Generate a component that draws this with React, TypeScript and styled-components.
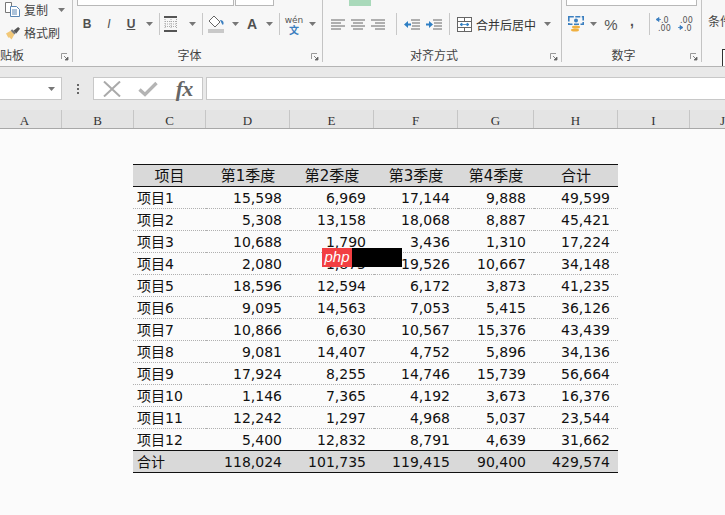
import React from "react";
import styled, { createGlobalStyle } from "styled-components";

const Global = createGlobalStyle`
  html, body { margin: 0; padding: 0; background: #fbfbfb; }
  body { width: 725px; height: 515px; overflow: hidden; font-family: "DejaVu Sans", "Noto Sans CJK SC", sans-serif; }
`;

const Page = styled.div`
  width: 725px; height: 515px; overflow: hidden; position: relative;
  display: flex; flex-direction: column;
`;

/* ---------- ribbon ---------- */
const Ribbon = styled.div`
  height: 66px; flex: none; display: flex; background: #f7f7f7;
  border-bottom: 1px solid #b4b4b4; overflow: hidden;
`;
const Group = styled.div<{ $w: number; $last?: boolean }>`
  width: ${p => p.$w}px; flex: none; height: 62px; position: relative;
  display: flex; flex-direction: column; box-sizing: border-box;
  border-right: ${p => (p.$last ? "none" : "1px solid #c4c4c4")};
`;
const Tools = styled.div`
  height: 48px; flex: none; display: flex; flex-direction: column;
`;
const TopClip = styled.div`
  height: 6px; flex: none; display: flex; box-sizing: border-box;
`;
const SelectStub = styled.div<{ $w: number; $ml?: number }>`
  width: ${p => p.$w}px; margin-left: ${p => p.$ml ?? 0}px; height: 6px; box-sizing: border-box;
  background: #fff; border: 1px solid #b8b8b8; border-top: none;
`;
const GreenStub = styled.div`
  width: 22px; height: 6px; margin-left: 26px; background: #a9d9ba;
`;
const ToolRow = styled.div<{ $pl: number }>`
  height: 36px; display: flex; align-items: center; padding-left: ${p => p.$pl}px;
`;
const Slot = styled.div<{ $w: number }>`
  width: ${p => p.$w}px; flex: none; display: flex; align-items: center; justify-content: center;
  color: #555; font-family: "Liberation Sans", sans-serif;
`;
const Percent = styled(Slot)`
  font-size: 15px;
`;
const Divider = styled.div`
  width: 1px; height: 22px; flex: none; background: #c8c8c8;
`;
const Letter = styled.span<{ $italic?: boolean; $underline?: boolean }>`
  font: ${p => (p.$italic ? "italic 400" : "700")} 12px "Liberation Sans", sans-serif;
  color: #505050; text-decoration: ${p => (p.$underline ? "underline" : "none")};
`;
const ColorLetter = styled(Letter)`
  font-size: 14px;
`;
const CommaMark = styled(Letter)`
  font-size: 14px; margin-top: -7px;
`;
const Wen = styled.div`
  display: flex; flex-direction: column; align-items: center;
  font: 9px/10px "DejaVu Sans", sans-serif; color: #555;
`;
const WenZi = styled.span`
  font: 700 10px/9px "Noto Sans CJK SC", sans-serif; color: #3b7fc0;
`;
const GroupLabel = styled.div`
  height: 14px; flex: none; display: flex; align-items: center; justify-content: center; padding-right: 16px;
  font: 12px/14px "Noto Sans CJK SC", sans-serif; color: #444;
`;
const ClippedLabel = styled(GroupLabel)`
  justify-content: flex-start; width: 24px; padding-right: 0;
`;
const Launcher = styled.svg`
  position: absolute; right: 3px; bottom: 1px; width: 8px; height: 8px;
`;
const ClipRows = styled.div`
  height: 48px; flex: none; display: flex; flex-direction: column; padding-left: 5px; box-sizing: border-box; margin-top: -2px;
  margin-bottom: 2px;
`;
const ClipRow = styled.div`
  height: 23px; display: flex; align-items: center; gap: 3px;
  font: 12px/16px "Noto Sans CJK SC", sans-serif; color: #444;
`;
const MergeText = styled.span`
  font: 12px "Noto Sans CJK SC", sans-serif; color: #333; width: 62px; margin-left: 4px; flex: none;
`;
const MoreCol = styled.div`
  flex: 1; padding: 13px 0 0 6px; font: 12px/16px "Noto Sans CJK SC", sans-serif; color: #444; position: relative; white-space: nowrap;
`;
const MoreBox = styled.div`
  position: absolute; left: 20px; top: 49px; width: 4px; height: 17px; border: 1px solid #333; background: #fff;
`;

/* ---------- formula bar ---------- */
const FormulaBar = styled.div`
  height: 43px; flex: none; display: flex; align-items: flex-start; padding-top: 10px;
  box-sizing: border-box; background: #e9e9e9;
`;
const NameBox = styled.div`
  width: 62px; height: 23px; flex: none; box-sizing: border-box; background: #fff;
  border: 1px solid #c8c8c8; border-left: none; display: flex; align-items: center; justify-content: flex-end; padding-right: 6px;
`;
const Dots = styled.div`
  width: 31px; height: 23px; flex: none; display: flex; flex-direction: column; align-items: center; justify-content: center; gap: 2px;
`;
const Dot = styled.i`
  width: 2px; height: 2px; background: #666; display: block;
`;
const FxBox = styled.div`
  width: 110px; height: 23px; flex: none; box-sizing: border-box; background: #fff; border: 1px solid #c8c8c8;
  display: flex; align-items: center;
`;
const FxSlot = styled.div`
  width: 36px; flex: none; display: flex; align-items: center; justify-content: center;
`;
const Fx = styled.span`
  font: italic 700 22px/22px "Liberation Serif", serif; color: #666; letter-spacing: -1px;
`;
const FormulaInput = styled.div`
  flex: 1; height: 23px; margin-left: 3px; box-sizing: border-box; background: #fff;
  border: 1px solid #c8c8c8; border-right: none;
`;

/* ---------- column headers ---------- */
const ColHeader = styled.div`
  height: 19px; flex: none; display: flex; background: #e4e4e4; border-bottom: 1px solid #a8a8a8; box-sizing: border-box; overflow: hidden;
`;
const ColCell = styled.div<{ $w: number; $pr?: number }>`
  width: ${p => p.$w}px; flex: none; box-sizing: border-box; border-right: 1px solid #c6c6c6;
  padding-right: ${p => p.$pr ?? 0}px;
  text-align: center; font: 13px/22px "Liberation Serif", serif; color: #333;
`;

/* ---------- sheet ---------- */
const Sheet = styled.div`
  flex: 1; padding: 35px 0 0 133px; background: #fbfbfb;
`;
const Table = styled.table`
  width: 485px; border-collapse: separate; border-spacing: 0; table-layout: fixed;
  font: 14px "DejaVu Sans", "Noto Sans CJK SC", sans-serif; color: #111;
`;
const Th = styled.th<{ $w: number }>`
  width: ${p => p.$w}px; height: 20px; padding: 1px 0 0; background: #d9d9d9; font-weight: 400; font-size: 15px; text-align: center;
  border-top: 1px solid #111; border-bottom: 1px solid #111; line-height: 20px;
`;
const Td = styled.td<{ $first?: boolean }>`
  height: 20px; padding: ${p => (p.$first ? "1px 0 0 4px" : "1px 8px 0 0")}; text-align: ${p => (p.$first ? "left" : "right")};
  border-bottom: 1px dotted #b0b0b0; line-height: 20px; white-space: nowrap;
`;
const TotalTd = styled(Td)`
  background: #d9d9d9; border-bottom: 1px solid #111;
`;
const LastTd = styled(Td)`
  border-bottom: 1px solid #111;
`;

/* ---------- watermark ---------- */
const Mark = styled.div`
  position: absolute; left: 322px; top: 248px; display: flex; height: 19px;
`;
const MarkRed = styled.div`
  width: 30px; background: #f23f42; color: #fff; text-align: center;
  font: italic 400 15px/17px "Liberation Sans", sans-serif;
`;
const MarkBlack = styled.div`
  width: 50px; background: #000;
`;

/* ---------- icons ---------- */
const Caret = () => (
  <svg width="7" height="4" viewBox="0 0 7 4"><path d="M0 0h7L3.5 4z" fill="#777" /></svg>
);
const LauncherIcon = () => (
  <Launcher viewBox="0 0 8 8">
    <path d="M.5 6V.5H6" fill="none" stroke="#999" />
    <path d="M3 3l3 3M7 4v3H4z" fill="#666" stroke="#666" strokeWidth=".8" />
  </Launcher>
);
const CopyIcon = () => (
  <svg width="16" height="15" viewBox="0 0 16 15" fill="none">
    <path d="M.5.5h6v10h-6z" stroke="#777" fill="#fff" />
    <path d="M5.5 4.5h6l3 3v7h-9z" stroke="#5a86b5" fill="#fff" />
    <path d="M7 8h5M7 10h5M7 12h5" stroke="#5a86b5" />
  </svg>
);
const BrushIcon = () => (
  <svg width="16" height="14" viewBox="0 0 17 15">
    <path d="M1 8l5-3 4 4-3 5.5-2.500-2.500-1 .5z" fill="#f2c878" />
    <path d="M6 5l4 4 1.500-1.500-4-4z" fill="#777" />
    <path d="M9 5l5-4 2 2-4 5z" fill="#555" />
  </svg>
);
const BorderIcon = () => (
  <svg width="14" height="16" viewBox="0 0 14 16" fill="none">
    <path d="M0 1h13M0 15h13" stroke="#555" strokeWidth="2" />
    <path d="M1 3v10M7 3v10M12.500 3v10M1 8h12M1 5.500h12M1 10.500h12" stroke="#aaa" strokeDasharray="1 1" />
  </svg>
);
const FillIcon = () => (
  <svg width="17" height="18" viewBox="0 0 17 18" fill="none">
    <path d="M6 1l6 6-5 5-6-6z" stroke="#666" fill="#fff" />
    <path d="M12 5c2 0 4 1 3.500 4-.2 1-1.300 1-1.500 0z" fill="#3b7fc0" />
    <rect x="0" y="14" width="16" height="4" fill="#c9c9c9" />
  </svg>
);
const AlignIcon = ({ kind }: { kind: "l" | "c" | "r" }) => {
  const short: [number, number] = kind === "l" ? [0, 10] : kind === "c" ? [2, 12] : [4, 14];
  const rows: [number, number][] = [[0, 14], short, [0, 14], short];
  return (
    <svg width="14" height="11" viewBox="0 0 14 11">
      {rows.map((r, i) => <path key={i} d={`M${r[0]} ${i * 3 + 1}H${r[1]}`} stroke="#666" />)}
    </svg>
  );
};
const IndentIcon = ({ rev }: { rev?: boolean }) => (
  <svg width="16" height="11" viewBox="0 0 16 11">
    <path d="M7 1h9M8 4h8M8 7h8M7 10h9" stroke="#666" />
    <path d={rev ? "M0 5.500L4 2v2.500h3v2H4V9z" : "M7 5.500L3 2v2.500H0v2h3V9z"} fill="#2f7fc4" />
  </svg>
);
const MergeIcon = () => (
  <svg width="15" height="15" viewBox="0 0 15 15" fill="none">
    <rect x=".5" y=".5" width="14" height="14" stroke="#666" fill="#fff" />
    <path d="M0 4.500h15M0 10.500h15M7.500 0v4.500M7.500 10.500V15" stroke="#666" />
    <path d="M3 7.500h9M3 7.500l2-1.500v3zM12 7.500l-2-1.500v3z" stroke="#2f7fc4" fill="#2f7fc4" strokeWidth=".8" />
  </svg>
);
const MoneyIcon = () => (
  <svg width="17" height="17" viewBox="0 0 17 17" fill="none">
    <rect x=".8" y=".8" width="14.400" height="7.400" stroke="#3b7fc0" strokeWidth="1.600" strokeDasharray="5 1.500" />
    <circle cx="8" cy="4.500" r="2" fill="#3b7fc0" />
    <ellipse cx="8" cy="11" rx="4" ry="1.500" fill="#f0b040" />
    <ellipse cx="7" cy="14" rx="4" ry="1.500" fill="#f0b040" />
  </svg>
);
const DecimalIcon = ({ inc }: { inc?: boolean }) => (
  <svg width="15" height="16" viewBox="0 0 15 16">
    <text x={inc ? 2 : 5} y="7" fontFamily="DejaVu Sans" fontSize="8" fill="#555">{inc ? ".00" : ".0"}</text>
    <text x={inc ? 6 : 2} y="15" fontFamily="DejaVu Sans" fontSize="8" fill="#555">{inc ? ".0" : ".00"}</text>
    <path d={inc ? "M0 11.500h3M2 9.500l3 2-3 2z" : "M5 3.500H1M3 1.500l-3 2 3 2z"} fill="#3b7fc0" stroke="#3b7fc0" strokeWidth=".8" />
  </svg>
);
const CrossIcon = () => (
  <svg width="18" height="16" viewBox="0 0 18 16"><path d="M1 .5l16 15M17 .5L1 15.500" stroke="#aaa" strokeWidth="2" /></svg>
);
const CheckIcon = () => (
  <svg width="20" height="16" viewBox="0 0 20 16"><path d="M1.500 8.500l5.500 5L18.500 2" stroke="#b4b4b4" strokeWidth="3.400" fill="none" /></svg>
);

/* ---------- data ---------- */
const headerCols: [string, number, number][] = [["A", 62, 12], ["B", 72, 0], ["C", 72, 0], ["D", 84, 0], ["E", 84, 0], ["F", 84, 0], ["G", 76, 0], ["H", 84, 0], ["I", 72, 0], ["J", 66, 0]];
const colW = [73, 84, 84, 84, 76, 84];
const heads = ["项目", "第1季度", "第2季度", "第3季度", "第4季度", "合计"];
const rows = [
  ["项目1", "15,598", "6,969", "17,144", "9,888", "49,599"],
  ["项目2", "5,308", "13,158", "18,068", "8,887", "45,421"],
  ["项目3", "10,688", "1,790", "3,436", "1,310", "17,224"],
  ["项目4", "2,080", "1,875", "19,526", "10,667", "34,148"],
  ["项目5", "18,596", "12,594", "6,172", "3,873", "41,235"],
  ["项目6", "9,095", "14,563", "7,053", "5,415", "36,126"],
  ["项目7", "10,866", "6,630", "10,567", "15,376", "43,439"],
  ["项目8", "9,081", "14,407", "4,752", "5,896", "34,136"],
  ["项目9", "17,924", "8,255", "14,746", "15,739", "56,664"],
  ["项目10", "1,146", "7,365", "4,192", "3,673", "16,376"],
  ["项目11", "12,242", "1,297", "4,968", "5,037", "23,544"],
  ["项目12", "5,400", "12,832", "8,791", "4,639", "31,662"],
];
const total = ["合计", "118,024", "101,735", "119,415", "90,400", "429,574"];

export default function App() {
  return (
    <Page>
      <Global />
      <Ribbon>
        <Group $w={73}>
          <ClipRows>
            <ClipRow><CopyIcon /><span>复制</span><Slot $w={20}><Caret /></Slot></ClipRow>
            <ClipRow><BrushIcon /><span>格式刷</span></ClipRow>
          </ClipRows>
          <ClippedLabel>贴板</ClippedLabel>
          <LauncherIcon />
        </Group>
        <Group $w={250}>
          <Tools>
            <TopClip><SelectStub $w={157} $ml={4} /><SelectStub $w={39} $ml={1} /></TopClip>
            <ToolRow $pl={3}>
              <Slot $w={22}><Letter>B</Letter></Slot>
              <Slot $w={22}><Letter $italic>I</Letter></Slot>
              <Slot $w={22}><Letter $underline>U</Letter></Slot>
              <Slot $w={14}><Caret /></Slot>
              <Slot $w={3} />
              <Divider />
              <Slot $w={22}><BorderIcon /></Slot>
              <Slot $w={20}><Caret /></Slot>
              <Divider />
              <Slot $w={27}><FillIcon /></Slot>
              <Slot $w={10}><Caret /></Slot>
              <Slot $w={24}><ColorLetter>A</ColorLetter></Slot>
              <Slot $w={10}><Caret /></Slot>
              <Slot $w={5} />
              <Divider />
              <Slot $w={28}>
                <Wen>wén<WenZi>文</WenZi></Wen>
              </Slot>
              <Slot $w={8}><Caret /></Slot>
            </ToolRow>
          </Tools>
          <GroupLabel>字体</GroupLabel>
          <LauncherIcon />
        </Group>
        <Group $w={239}>
          <Tools>
            <TopClip><GreenStub /></TopClip>
            <ToolRow $pl={5}>
              <Slot $w={20}><AlignIcon kind="l" /></Slot>
              <Slot $w={20}><AlignIcon kind="c" /></Slot>
              <Slot $w={20}><AlignIcon kind="r" /></Slot>
              <Slot $w={8} />
              <Divider />
              <Slot $w={4} />
              <Slot $w={22}><IndentIcon rev /></Slot>
              <Slot $w={22}><IndentIcon /></Slot>
              <Slot $w={4} />
              <Divider />
              <Slot $w={7} />
              <MergeIcon />
              <MergeText>合并后居中</MergeText>
              <Slot $w={18}><Caret /></Slot>
            </ToolRow>
          </Tools>
          <GroupLabel>对齐方式</GroupLabel>
          <LauncherIcon />
        </Group>
        <Group $w={140}>
          <Tools>
            <TopClip><SelectStub $w={131} $ml={4} /></TopClip>
            <ToolRow $pl={6}>
              <MoneyIcon />
              <Slot $w={17}><Caret /></Slot>
              <Percent $w={18}>%</Percent>
              <Slot $w={24}><CommaMark>,</CommaMark></Slot>
              <Slot $w={5} />
              <Divider />
              <Slot $w={6} />
              <DecimalIcon />
              <Slot $w={7} />
              <DecimalIcon inc />
            </ToolRow>
          </Tools>
          <GroupLabel>数字</GroupLabel>
          <LauncherIcon />
        </Group>
        <MoreCol>条件<MoreBox /></MoreCol>
      </Ribbon>

      <FormulaBar>
        <NameBox><Caret /></NameBox>
        <Dots><Dot /><Dot /><Dot /></Dots>
        <FxBox>
          <FxSlot><CrossIcon /></FxSlot>
          <FxSlot><CheckIcon /></FxSlot>
          <FxSlot><Fx>fx</Fx></FxSlot>
        </FxBox>
        <FormulaInput />
      </FormulaBar>

      <ColHeader>
        {headerCols.map(([l, w, pr]) => <ColCell key={l} $w={w} $pr={pr}>{l}</ColCell>)}
      </ColHeader>

      <Sheet>
        <Table>
          <thead>
            <tr>
              {heads.map((h, i) => <Th key={h} $w={colW[i]}>{h}</Th>)}
            </tr>
          </thead>
          <tbody>
            {rows.map((r, ri) => (
              <tr key={r[0]}>
                {r.map((c, i) => {
                  const Cell = ri === rows.length - 1 ? LastTd : Td;
                  return <Cell key={i} $first={i === 0}>{c}</Cell>;
                })}
              </tr>
            ))}
            <tr>
              {total.map((c, i) => <TotalTd key={i} $first={i === 0}>{c}</TotalTd>)}
            </tr>
          </tbody>
        </Table>
      </Sheet>

      <Mark>
        <MarkRed>php</MarkRed>
        <MarkBlack />
      </Mark>
    </Page>
  );
}
